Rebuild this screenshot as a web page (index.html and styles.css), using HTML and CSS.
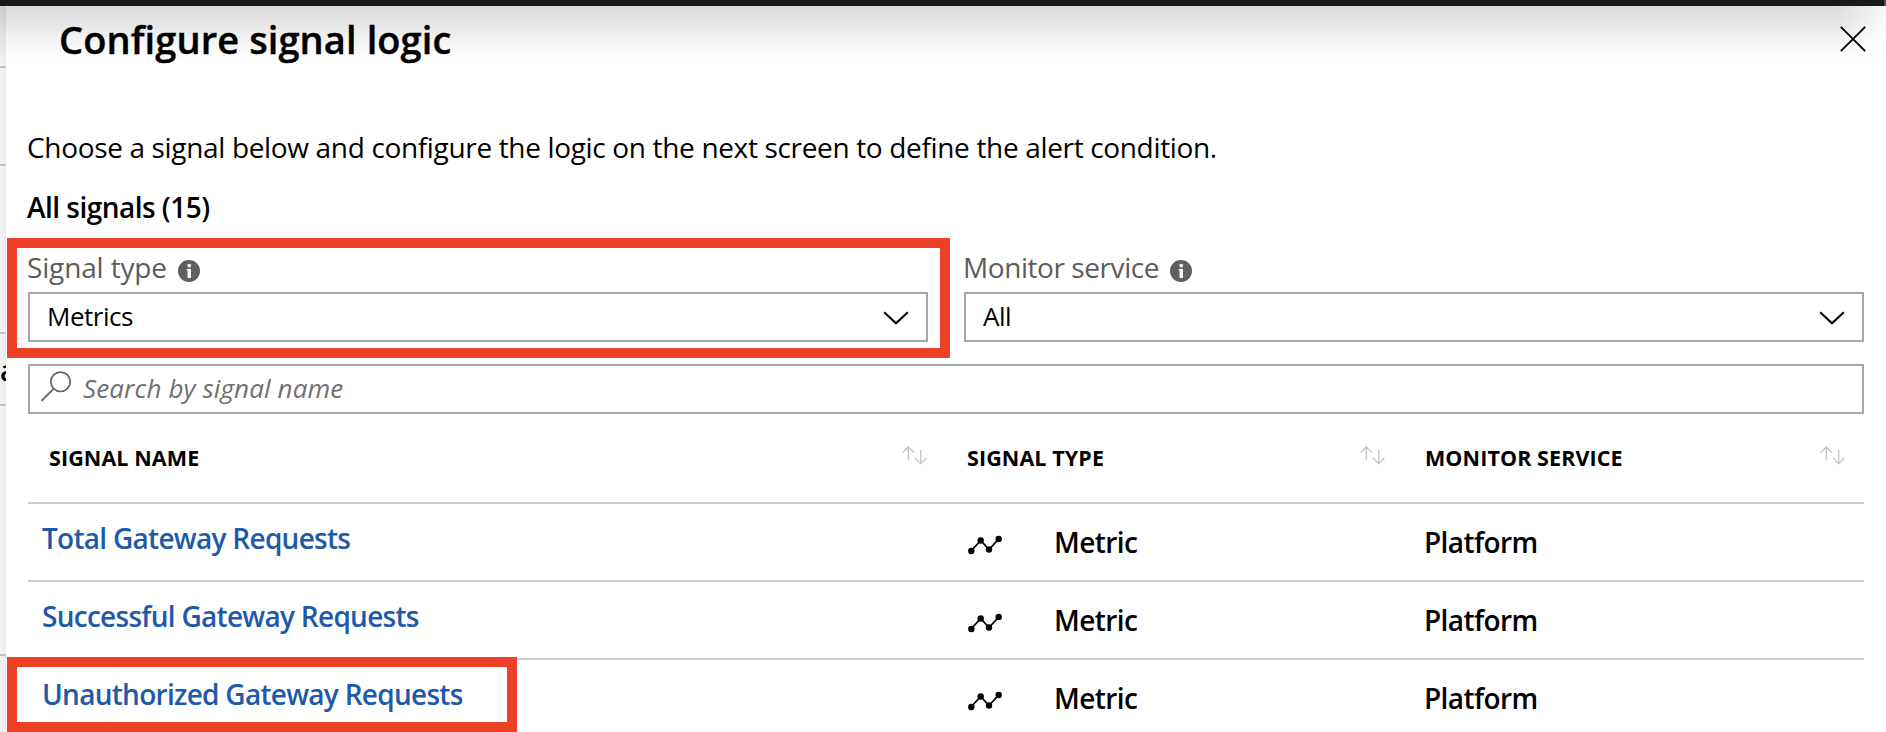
FILE: index.html
```
<!DOCTYPE html>
<html lang="en">
<head>
<meta charset="utf-8">
<title>Configure signal logic</title>
<link rel="stylesheet" href="styles.css">
</head>
<body>
<svg class="defs" aria-hidden="true">
  <symbol id="info" viewBox="0 0 22 22"><circle cx="11" cy="11" r="11" fill="#5f5f5f"/><circle cx="11.2" cy="5.6" r="1.9" fill="#fff"/><path d="M8.6 9h4.4v9H9.6v-7.4H8.6z" fill="#fff"/></symbol>
  <symbol id="chevron" viewBox="0 0 26 14"><path d="M1.2 1.2 13 12.200 24.800 1.200" fill="none" stroke="#000" stroke-width="2.2"/></symbol>
  <symbol id="sort" viewBox="0 0 25 19"><path d="M6.300 14.500V1.200M.6 6.600 6.300 1l5.700 5.600M18.700 4v13.500M13 12l5.700 5.600L24.400 12" fill="none" stroke="#c4c4c4" stroke-width="1.300"/></symbol>
  <symbol id="metric" viewBox="0 0 34 20"><path d="M3 16 12.700 5.500 21 14.500 30.700 4" fill="none" stroke="#000" stroke-width="1.800"/><g fill="#000"><circle cx="3.300" cy="16" r="3.200"/><circle cx="12.700" cy="5.500" r="3.200"/><circle cx="21" cy="14.500" r="3.200"/><circle cx="30.700" cy="4" r="3.200"/></g></symbol>
</svg>
<div class="topbar"></div>
<div class="shell">
  <aside class="behind">
    <i class="gap-a"></i><i class="gap-b"></i><i class="gap-c"></i>
    <div class="peek"><span>a</span></div>
    <i class="gap-d"></i>
  </aside>
  <main class="panel">
    <header class="head">
      <h1>Configure signal logic</h1>
      <svg class="close" viewBox="0 0 26 26"><path d="M.8.8l24.400 24.400M25.200.8.8 25.200" stroke="#000" stroke-width="1.900"/></svg>
    </header>
    <p class="desc">Choose a signal below and configure the logic on the next screen to define the alert condition.</p>
    <p class="count">All signals (15)</p>
    <div class="filters">
      <div class="field marked">
        <div class="label"><span class="l1">Signal type</span><svg class="info"><use href="#info"/></svg></div>
        <div class="select"><span>Metrics</span><svg class="chev"><use href="#chevron"/></svg></div>
      </div>
      <div class="field">
        <div class="label"><span class="l2">Monitor service</span><svg class="info"><use href="#info"/></svg></div>
        <div class="select"><span>All</span><svg class="chev"><use href="#chevron"/></svg></div>
      </div>
    </div>
    <div class="search">
      <svg class="glass" viewBox="0 0 30 31"><circle cx="19.500" cy="10.800" r="9.700" fill="none" stroke="#666" stroke-width="1.700"/><path d="M12.500 17.800.6 29.800" stroke="#666" stroke-width="1.900"/></svg>
      <span>Search by signal name</span>
    </div>
    <div class="table">
      <div class="row thead">
        <div class="th"><span>SIGNAL NAME</span><svg class="sort"><use href="#sort"/></svg></div>
        <div class="th"><span>SIGNAL TYPE</span><svg class="sort"><use href="#sort"/></svg></div>
        <div class="th"><span>MONITOR SERVICE</span><svg class="sort"><use href="#sort"/></svg></div>
      </div>
      <div class="row">
        <a class="name">Total Gateway Requests</a>
        <div class="type"><svg class="metric"><use href="#metric"/></svg><span>Metric</span></div>
        <div class="service">Platform</div>
      </div>
      <div class="row">
        <a class="name">Successful Gateway Requests</a>
        <div class="type"><svg class="metric"><use href="#metric"/></svg><span>Metric</span></div>
        <div class="service">Platform</div>
      </div>
      <div class="row picked">
        <a class="name">Unauthorized Gateway Requests</a>
        <div class="type"><svg class="metric"><use href="#metric"/></svg><span>Metric</span></div>
        <div class="service">Platform</div>
      </div>
    </div>
  </main>
</div>
</body>
</html>
```
FILE: styles.css
```
*, *::before, *::after { box-sizing: border-box; margin: 0; padding: 0; }
body {
  height: 732px;
  overflow: hidden;
  background: #fff;
  color: #000;
  font: 400 28px/40px "Open Sans", "Noto Sans", sans-serif;
  white-space: nowrap;
}
svg { display: block; flex: none; }
.defs { display: none; }
.topbar {
  height: 6px;
  background: #1b1a1a;
  border-right: 2px solid #4c4c4c;
}
.shell { display: flex; height: 726px; position: relative; }
/* drop shadow cast by the top bar */
.shell::before {
  content: "";
  position: absolute;
  inset: 0 0 auto 0;
  height: 56px;
  background: linear-gradient(rgba(0,0,0,.14), rgba(0,0,0,.115) 25%, rgba(0,0,0,.055) 55%, rgba(0,0,0,.015) 82%, transparent);
  mask-image: linear-gradient(to left, rgba(0,0,0,.2), #000 50px);
}

.behind {
  width: 6px;
  background: linear-gradient(to right, #f3f3f3, #ebebeb);
}
.behind i { display: block; border-bottom: 2px solid #c6c6c6; }
.gap-a { height: 62px; }
.gap-b { height: 98px; }
.gap-c { height: 168px; }
.gap-d { height: 250px; }
.peek { height: 72px; padding: 16px 0 0; border-bottom: 2px solid #c6c6c6; font-weight: 600; }

/* the panel slides over the page behind it */
.panel { flex: 1; padding: 0 22px; background: #fff; z-index: 0; }
.shell::before { z-index: 1; }
.head { display: flex; justify-content: space-between; height: 121px; padding: 13px 0 0 32px; }
h1 { font-size: 38px; font-weight: 600; line-height: 40px; letter-spacing: .1px; -webkit-text-stroke: .4px #000; margin-left: -1px; }
.close { width: 26px; height: 26px; margin: 7px -2px 0 0; }
.desc { height: 60px; margin-left: -1px; letter-spacing: -.34px; }
.count { height: 60px; margin-left: -1px; font-weight: 600; letter-spacing: -.52px; }

.filters { display: grid; grid-template-columns: 900px 900px; column-gap: 36px; height: 117px; }
.field { position: relative; }
.label { display: flex; height: 45px; color: #5c5c5c; letter-spacing: -.3px; }
.l1 { width: 151px; margin-left: -1px; letter-spacing: -.15px; }
.l2 { width: 206px; margin-left: -1px; letter-spacing: -.43px; }
.l2 + .info { margin-left: 1px; }
.info { width: 22px; height: 22px; margin-top: 13px; }
.select {
  display: flex;
  justify-content: space-between;
  align-items: center;
  height: 50px;
  padding: 0 18px 2px 17px;
  border: 2px solid #a6a6a6;
  font-size: 26px;
  letter-spacing: -.5px;
}
.chev { width: 26px; height: 14px; margin: 3px -1px 0 0; }
.marked::after {
  content: "";
  position: absolute;
  inset: -9px -22px auto -21px;
  height: 120px;
  border: 10px solid #ed4127;
}

.search {
  display: flex;
  align-items: center;
  gap: 12px;
  height: 50px;
  padding: 0 11px 2px;
  border: 2px solid #a6a6a6;
  color: #707070;
  font-size: 26px;
  font-style: italic;
  letter-spacing: .12px;
}
.glass { width: 30px; height: 31px; margin-top: -3px; }

.row {
  display: grid;
  grid-template-columns: 918px 458px 460px;
  height: 78px;
  border-bottom: 2px solid #ccc;
  font-weight: 600;
  letter-spacing: -.6px;
  position: relative;
}
.thead { height: 90px; }
.th {
  display: flex;
  justify-content: space-between;
  padding: 29px 20px 0 21px;
  font-size: 21.5px;
  font-weight: 700;
  line-height: 30px;
  letter-spacing: .1px;
}
.sort { width: 25px; height: 19px; margin: 3px -1px 0 0; }
.name { padding: 14px 0 0 14px; color: #1f5aa9; letter-spacing: -.72px; }
.type { display: flex; padding: 18px 0 0 22px; }
.metric { width: 34px; height: 20px; margin: 13px 52px 0 0; }
.service { padding: 18px 0 0 20px; }
.picked::after {
  content: "";
  position: absolute;
  left: -21px;
  top: -3px;
  width: 510px;
  height: 75px;
  border: 10px solid #ed4127;
}
```
